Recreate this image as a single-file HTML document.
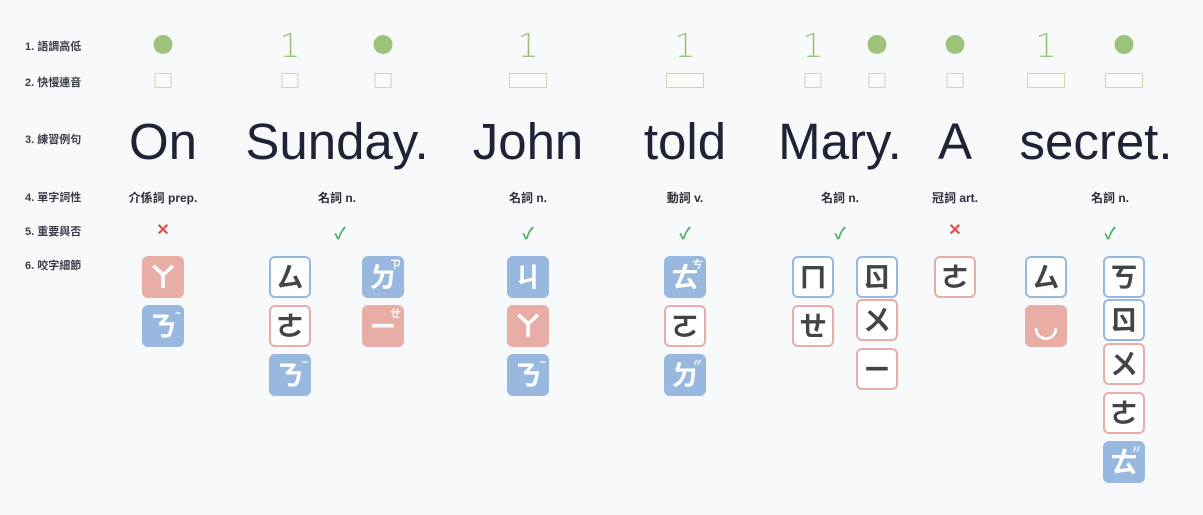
<!DOCTYPE html>
<html><head><meta charset="utf-8"><style>
body{margin:0;width:1203px;height:515px;background:#f8f9fb;position:relative;overflow:hidden;font-family:"Liberation Sans","Noto Sans CJK TC",sans-serif}
.lab{position:absolute;left:25px;font-size:11px;font-weight:bold;color:#3a3f4a}
.dot{position:absolute;width:19px;height:19px;border-radius:50%;background:#9dc37a;transform:translateX(-50%);top:35px}
.one{position:absolute;transform:translateX(-50%);top:26px;font-size:33px;color:#9dc37a;font-family:"DejaVu Sans",sans-serif;font-weight:300}
.bx{position:absolute;transform:translateX(-50%);top:73px;height:13px;border:1px solid #c5d9b3;background:#fbfcf9}
.w{position:absolute;transform:translateX(-50%);top:112px;font-size:51px;color:#1e2435}
.pos{position:absolute;transform:translateX(-50%);top:189px;font-size:12px;font-weight:bold;color:#2a2f3a}
.ck{position:absolute;transform:translateX(-50%);top:220px;font-size:16px;font-weight:bold}
.t{position:absolute;width:42px;height:42px;box-sizing:border-box;border-radius:6px;transform:translateX(-50%);text-align:center;line-height:40px;font-size:28px;font-weight:bold;font-family:"Noto Sans CJK TC",sans-serif}
.pf{background:#e8ada5;color:#fff}.bf{background:#98b8e0;color:#fff}
.pw{background:#fff;border:2px solid #e8ada5;color:#444;line-height:37px}.bw{background:#fff;border:2px solid #98b8e0;color:#444;line-height:37px}
sup{font-size:11px;position:absolute;top:-12px;right:3px}
</style></head><body>
<div class="lab" style="top:38px">1. 語調高低</div>
<div class="lab" style="top:74px">2. 快慢連音</div>
<div class="lab" style="top:131px">3. 練習例句</div>
<div class="lab" style="top:189px">4. 單字詞性</div>
<div class="lab" style="top:223px">5. 重要與否</div>
<div class="lab" style="top:257px">6. 咬字細節</div>

<div class="dot" style="left:163px"></div><div class="one" style="left:290px">1</div><div class="dot" style="left:383px"></div>
<div class="one" style="left:528px">1</div><div class="one" style="left:685px">1</div><div class="one" style="left:813px">1</div>
<div class="dot" style="left:877px"></div><div class="dot" style="left:955px"></div><div class="one" style="left:1046px">1</div><div class="dot" style="left:1124px"></div>

<div class="bx" style="left:163px;width:15px"></div><div class="bx" style="left:290px;width:15px"></div><div class="bx" style="left:383px;width:15px"></div>
<div class="bx" style="left:528px;width:36px"></div><div class="bx" style="left:685px;width:36px"></div><div class="bx" style="left:813px;width:15px"></div>
<div class="bx" style="left:877px;width:15px"></div><div class="bx" style="left:955px;width:15px"></div><div class="bx" style="left:1046px;width:36px"></div><div class="bx" style="left:1124px;width:36px"></div>

<div class="w" style="left:163px">On</div><div class="w" style="left:337px">Sunday.</div><div class="w" style="left:528px">John</div>
<div class="w" style="left:685px">told</div><div class="w" style="left:840px">Mary.</div><div class="w" style="left:955px">A</div><div class="w" style="left:1096px">secret.</div>

<div class="pos" style="left:163px">介係詞 prep.</div><div class="pos" style="left:337px">名詞 n.</div><div class="pos" style="left:528px">名詞 n.</div>
<div class="pos" style="left:685px">動詞 v.</div><div class="pos" style="left:840px">名詞 n.</div><div class="pos" style="left:955px">冠詞 art.</div><div class="pos" style="left:1110px">名詞 n.</div>

<div class="ck" style="left:163px;color:#e05252">✕</div><div class="ck" style="left:340px;color:#4caf60">✓</div><div class="ck" style="left:528px;color:#4caf60">✓</div>
<div class="ck" style="left:685px;color:#4caf60">✓</div><div class="ck" style="left:840px;color:#4caf60">✓</div><div class="ck" style="left:955px;color:#e05252">✕</div><div class="ck" style="left:1110px;color:#4caf60">✓</div>

<div class="t pf" style="left:163px;top:256px">ㄚ</div><div class="t bf" style="left:163px;top:305px">ㄋ<sup>~</sup></div>
<div class="t bw" style="left:290px;top:256px">ㄙ</div><div class="t pw" style="left:290px;top:305px">ㄜ</div><div class="t bf" style="left:290px;top:354px">ㄋ<sup>~</sup></div>
<div class="t bf" style="left:383px;top:256px">ㄉ<sup>ㄗ</sup></div><div class="t pf" style="left:383px;top:305px">ㄧ<sup>ㄝ</sup></div>
<div class="t bf" style="left:528px;top:256px">ㄐ</div><div class="t pf" style="left:528px;top:305px">ㄚ</div><div class="t bf" style="left:528px;top:354px">ㄋ<sup>~</sup></div>
<div class="t bf" style="left:685px;top:256px">ㄊ<sup>ㄘ</sup></div><div class="t pw" style="left:685px;top:305px">ㄛ</div><div class="t bf" style="left:685px;top:354px">ㄉ<sup>〃</sup></div>
<div class="t bw" style="left:813px;top:256px">ㄇ</div><div class="t pw" style="left:813px;top:305px">ㄝ</div>
<div class="t bw" style="left:877px;top:256px">ㄖ</div><div class="t pw" style="left:877px;top:299px">ㄨ</div><div class="t pw" style="left:877px;top:348px">ㄧ</div>
<div class="t pw" style="left:955px;top:256px">ㄜ</div>
<div class="t bw" style="left:1046px;top:256px">ㄙ</div><div class="t pf" style="left:1046px;top:305px">◡</div>
<div class="t bw" style="left:1124px;top:256px">ㄎ</div><div class="t bw" style="left:1124px;top:299px">ㄖ</div><div class="t pw" style="left:1124px;top:343px">ㄨ</div><div class="t pw" style="left:1124px;top:392px">ㄜ</div><div class="t bf" style="left:1124px;top:441px">ㄊ<sup>〃</sup></div>
</body></html>
